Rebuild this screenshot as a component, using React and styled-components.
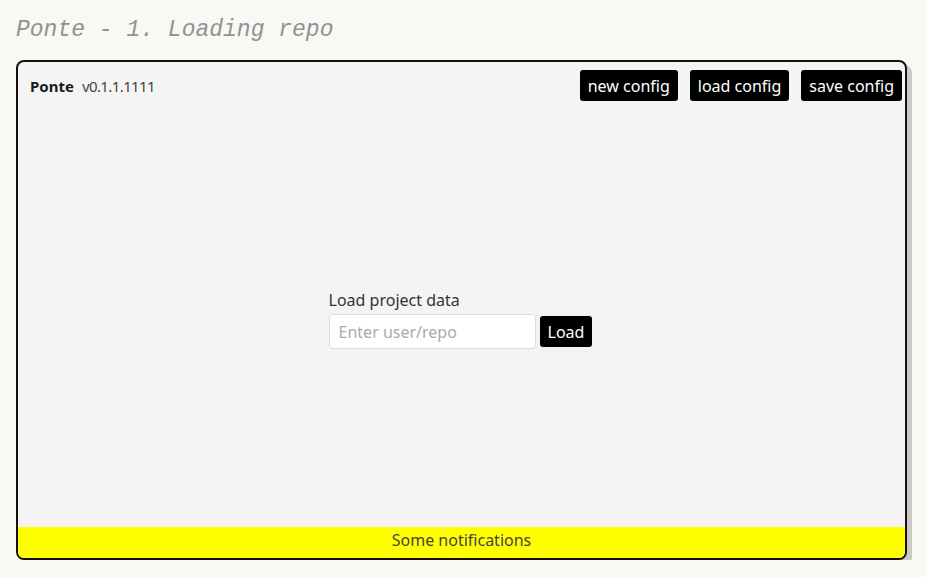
import styled, { createGlobalStyle } from "styled-components";

const GlobalStyle = createGlobalStyle`
  html, body {
    margin: 0;
    padding: 0;
    background-color: #f8f8f4;
  }
  body {
    font-family: "Noto Sans", "Open Sans", sans-serif;
  }
`;

const Page = styled.div`
  padding: 12px 16px 0 16px;
  width: 891px;
`;

const Title = styled.h1`
  margin: 0 0 12px 0;
  font-family: "Liberation Mono", "DejaVu Sans Mono", monospace;
  font-style: italic;
  font-weight: 400;
  font-size: 23px;
  line-height: 36px;
  color: #929290;
`;

const Frame = styled.div`
  box-sizing: border-box;
  height: 500px;
  border: 2px solid #1a0f0c;
  border-radius: 8px;
  background-color: #f4f4f4;
  box-shadow: 5px 5px 0 #c9c9c5;
  display: flex;
  flex-direction: column;
  overflow: hidden;
`;

const Header = styled.div`
  display: flex;
  flex-direction: row;
  justify-content: space-between;
  align-items: center;
  padding: 8px 3px 0 12px;
`;

const Brand = styled.div`
  display: flex;
  align-items: baseline;
  gap: 8px;
  font-size: 15px;
  color: #222;
`;

const BrandName = styled.span`
  font-weight: 700;
  color: #1a1a1a;
`;

const Version = styled.span`
  color: #444;
  letter-spacing: -0.6px;
`;

const Actions = styled.div`
  display: flex;
  gap: 12px;
`;

const DarkButton = styled.button`
  background-color: #000;
  color: #fff;
  border: none;
  border-radius: 3px;
  font-family: "Noto Sans", sans-serif;
  font-size: 16px;
  height: 31px;
  padding: 0 8px;
  cursor: pointer;
`;

const Main = styled.div`
  flex: 1;
  display: flex;
  justify-content: center;
  align-items: center;
  padding-top: 10px;
`;

const Form = styled.div`
  display: flex;
  flex-direction: column;
  gap: 3px;
  margin-left: -2px;
`;

const Label = styled.label`
  font-size: 16px;
  color: #333;
`;

const Row = styled.div`
  display: flex;
  align-items: center;
  gap: 4px;
`;

const Input = styled.input`
  box-sizing: border-box;
  width: 207px;
  height: 35px;
  border: 1px solid #dcdcdc;
  border-radius: 4px;
  background: #fff;
  padding: 0 9px;
  font-family: "Noto Sans", sans-serif;
  font-size: 16px;
  color: #333;
  &::placeholder {
    color: #a8aab0;
  }
`;

const Footer = styled.div`
  height: 31px;
  background-color: #ffff00;
  display: flex;
  justify-content: center;
  align-items: center;
  padding-bottom: 5px;
  box-sizing: border-box;
  font-size: 16px;
  color: #444;
`;

const App = () => {
  return (
    <Page>
      <GlobalStyle />
      <Title>Ponte - 1. Loading repo</Title>
      <Frame>
        <Header>
          <Brand>
            <BrandName>Ponte</BrandName>
            <Version>v0.1.1.1111</Version>
          </Brand>
          <Actions>
            <DarkButton>new config</DarkButton>
            <DarkButton>load config</DarkButton>
            <DarkButton>save config</DarkButton>
          </Actions>
        </Header>
        <Main>
          <Form>
            <Label>Load project data</Label>
            <Row>
              <Input placeholder="Enter user/repo" />
              <DarkButton small>Load</DarkButton>
            </Row>
          </Form>
        </Main>
        <Footer>Some notifications</Footer>
      </Frame>
    </Page>
  );
};

export default App;
